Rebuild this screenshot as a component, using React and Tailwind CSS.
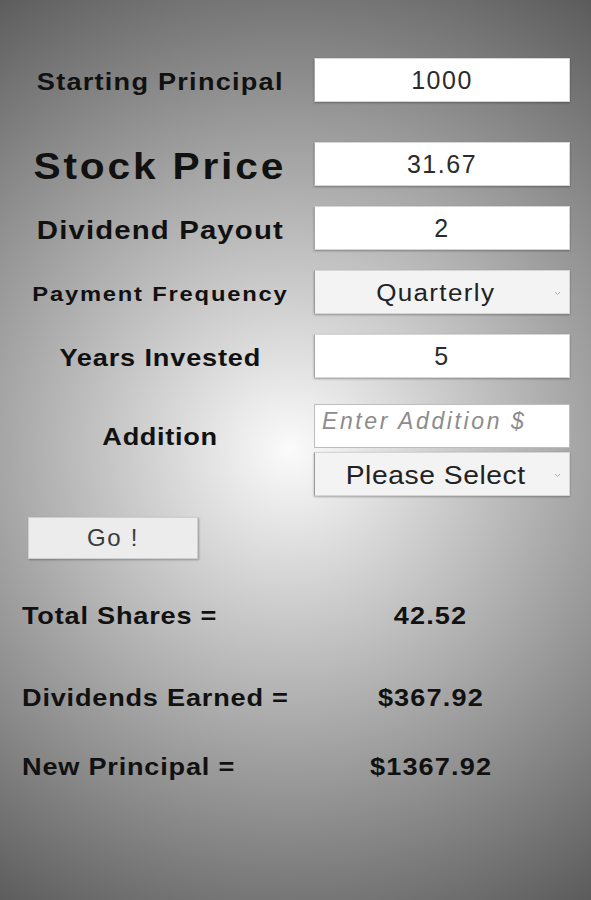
import { useState } from "react";

const labelFont = { fontFamily: '"Liberation Sans", Arial, sans-serif' };

function Chevron() {
  return (
    <svg width="7" height="5" viewBox="0 0 7 5" className="absolute right-[8px] top-[20px]">
      <path d="M1 1 L3.5 3.5 L6 1" fill="none" stroke="#a8a8a8" strokeWidth="1" />
    </svg>
  );
}

function FieldBox({ value }) {
  return (
    <input
      readOnly
      value={value}
      className="h-[44px] w-[256px] bg-white border border-[#d6d6d6] border-l-[#a6a6a6] shadow-[0_1px_2px_rgba(0,0,0,0.3)] text-center text-[25px] tracking-[1.5px] text-[#2b2b2b] outline-none"
      style={labelFont}
    />
  );
}

function SelectBox({ text, size }) {
  return (
    <div className="relative h-[44px] w-[256px] bg-[#f3f3f3] border border-[#d6d6d6] border-l-[#9a9a9a] shadow-[0_1px_2px_rgba(0,0,0,0.3)] flex items-center justify-center pr-[12px] pt-[2px]">
      <span className={"inline-block scale-x-[1.13] leading-none text-[#222] " + size} style={labelFont}>
        {text}
      </span>
      <Chevron />
    </div>
  );
}

// 라벨 + 입력칸 한 줄
function Row({ label, labelClass, children, gap }) {
  return (
    <div className={"flex items-center h-[44px] " + gap}>
      <div className="w-[314px] pl-[6px] pt-[5px] text-center">
        <span
          className={"inline-block scale-x-[1.13] leading-none font-bold text-[#111] whitespace-nowrap " + labelClass}
          style={labelFont}
        >
          {label}
        </span>
      </div>
      {children}
    </div>
  );
}

function ResultRow({ label, value, gap }) {
  return (
    <div className={"flex items-center h-[30px] " + gap} style={labelFont}>
      <div className="w-[271px] pl-[22px]">
        <span className="inline-block origin-left scale-x-[1.13] font-bold text-[24px] tracking-[0.7px] text-[#111] whitespace-nowrap">
          {label}
        </span>
      </div>
      <div className="flex-1 text-center">
        <span className="inline-block scale-x-[1.13] font-bold text-[24px] tracking-[1px] text-[#111]">{value}</span>
      </div>
    </div>
  );
}

export default function App() {
  const [addition, setAddition] = useState("");

  return (
    <div className="min-h-[900px] w-full bg-[radial-gradient(circle_at_290px_450px,#fbfbfb_0px,#5a5a5a_545px)] pt-[58px]">
      <Row label="Starting Principal" labelClass="text-[24px] tracking-[1.1px]" gap="">
        <FieldBox value="1000" />
      </Row>

      <Row label="Stock Price" labelClass="text-[36px] tracking-[2.5px]" gap="mt-[40px]">
        <FieldBox value="31.67" />
      </Row>

      <Row label="Dividend Payout" labelClass="text-[26px] tracking-[1px]" gap="mt-[20px]">
        <FieldBox value="2" />
      </Row>

      <Row label="Payment Frequency" labelClass="text-[21px] tracking-[1.6px]" gap="mt-[20px]">
        <SelectBox text="Quarterly" size="text-[23px] tracking-[1.2px]" />
      </Row>

      <Row label="Years Invested" labelClass="text-[24px] tracking-[0.75px]" gap="mt-[20px]">
        <FieldBox value="5" />
      </Row>

      {/* addition: 금액 입력 + 선택 */}
      <div className="flex items-start mt-[26px]">
        <div className="w-[314px] pl-[6px] pt-[21px] text-center">
          <span
            className="inline-block scale-x-[1.13] leading-none font-bold text-[24px] tracking-[0.6px] text-[#111]"
            style={labelFont}
          >
            Addition
          </span>
        </div>
        <div className="flex flex-col gap-[4px]">
          <input
            value={addition}
            onChange={(e) => setAddition(e.target.value)}
            placeholder="Enter Addition $"
            className="h-[44px] w-[256px] bg-white border border-[#bdbdbd] pl-[7px] pb-[10px] text-[23px] tracking-[2.6px] text-[#2b2b2b] placeholder:italic placeholder:text-[#8c8c8c] outline-none"
            style={labelFont}
          />
          <SelectBox text="Please Select" size="text-[25px] tracking-[0.5px]" />
        </div>
      </div>

      <div className="pl-[28px] mt-[21px]">
        <button
          className="h-[42px] w-[170px] bg-[#ececec] border border-[#cfcfcf] shadow-[1px_1px_2px_rgba(0,0,0,0.3)] text-[24px] tracking-[1.7px] text-[#3a3a3a]"
          style={labelFont}
        >
          Go !
        </button>
      </div>

      <ResultRow label="Total Shares =" value="42.52" gap="mt-[42px]" />
      <ResultRow label="Dividends Earned =" value="$367.92" gap="mt-[52px]" />
      <ResultRow label="New Principal =" value="$1367.92" gap="mt-[39px]" />
    </div>
  );
}
